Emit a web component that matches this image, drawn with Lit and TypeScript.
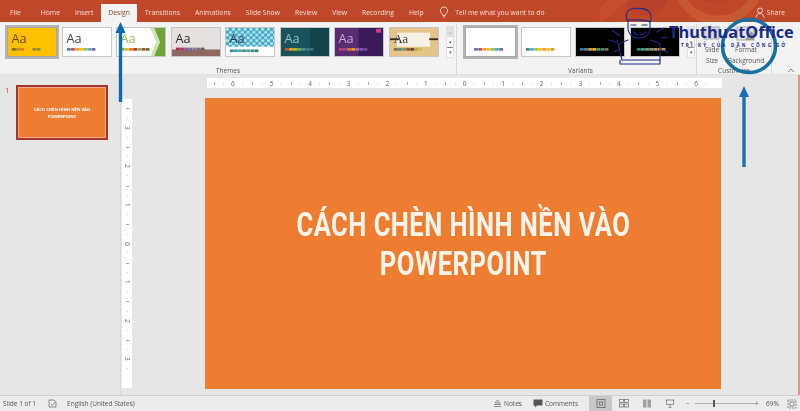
import { LitElement, html, css, svg } from "lit";
import { customElement } from "lit/decorators.js";

const RULER_H = [6, 5, 4, 3, 2, 1, 0, 1, 2, 3, 4, 5, 6];
const RULER_V = [3, 2, 1, 0, 1, 2, 3];
const TABS = ["File", "Home", "Insert", "Design", "Transitions", "Animations", "Slide Show", "Review", "View", "Recording", "Help"];
const PALETTE = ["#4f81bd", "#c0504d", "#f79646", "#ffc000", "#9bbb59", "#4bacc6", "#8064a2"];

type Theme = { bg: string; aa: string; extra?: unknown; serif?: boolean; swY?: number; swX?: number; sw?: string[]; sel?: boolean };

const dots = svg`<defs><pattern id="dots" width="6" height="6" patternUnits="userSpaceOnUse"><rect width="6" height="6" fill="#3fa9c9"/><circle cx="1.5" cy="1.5" r="1.6" fill="#bfe3ee"/><circle cx="4.5" cy="4.5" r="1.6" fill="#bfe3ee"/></pattern></defs>`;

const THEMES: Theme[] = [
  { bg: "#ffc000", aa: "#6b4a10", sw: ["#7b6a2e", "#c08a20", "#e8741c", "#ffc000", "#ffc000", "#8c8c3c", "#8c8c3c"], sel: true },
  { bg: "#ffffff", aa: "#404040" },
  { bg: "#ffffff", aa: "#8fc04c", extra: svg`<path d="M37 0H49V30H37L43 15Z" fill="#6ea53a"/><path d="M34 0H38L44 15L38 30H34L40 15Z" fill="#cfe3b2"/>`, sw: ["#7ab648", "#e8b820", "#e87c1c", "#b83020", "#7ab648", "#c04030", "#4a7a28"] },
  { bg: "#e6e0de", aa: "#2b2b2b", extra: svg`<rect x="0" y="23" width="49" height="7" fill="#8c6a60"/>`, swY: 21, sw: ["#b02a4c", "#a83a6c", "#8c5a90", "#7a6aa8", "#8a7aa0", "#7a7080", "#6a5a60"] },
  { bg: "url(#dots)", aa: "#1f3f55", extra: svg`<rect x="0" y="20" width="49" height="10" fill="#ffffff"/>`, swY: 23, sw: ["#2f8aa8", "#3f9ab0", "#4fa0a8", "#3f9078", "#4f9a88", "#3f8a88", "#2f7a80"] },
  { bg: "#17484f", aa: "#8cc8c8", extra: svg`<rect width="49" height="30" fill="#0d3a44" opacity=".4"/><rect x="0" y="0" width="30" height="30" fill="#1f6468" opacity=".5"/>`, sw: ["#d0532a", "#e6a820", "#c8b830", "#7ab648", "#4f9a88", "#3f7a90", "#4f6a90"] },
  { bg: "#3a1a58", aa: "#c8a8d8", extra: svg`<rect x="0" y="0" width="24" height="30" fill="#6a3a80" opacity=".6"/><rect x="42" y="1" width="5" height="4" fill="#d0408c"/>`, sw: ["#c84080", "#a04890", "#e07030", "#e6a820", "#a868c0", "#8858b0", "#7048a0"] },
  { bg: "#e4c48a", aa: "#3a3a3a", serif: true, extra: svg`<rect x="7" y="5" width="34" height="15" fill="#f8f2e6"/><rect x="0" y="11" width="9" height="2" fill="#3a3020"/><rect x="40" y="11" width="9" height="2" fill="#3a3020"/>`, sw: ["#8a6a30", "#4f8a90", "#7a9a50", "#a04a30", "#5a4a30", "#c8a040", "#d8b850"] },
];

const VARIANTS: Theme[] = [
  { bg: "#ffffff", aa: "", sel: true, swX: 8, sw: ["#4f81bd", "#c0504d", "#f79646", "#ffc000", "#9bbb59", "#4bacc6", "#8064a2"] },
  { bg: "#ffffff", aa: "", swX: 4, sw: ["#3f8a78", "#4bacc6", "#9bbb59", "#ffc000", "#f79646", "#ffc000", "#c8a040"] },
  { bg: "#000000", aa: "", swX: 4, sw: ["#4f7a9d", "#4f8a90", "#d8a040", "#e6c040", "#6a9a60", "#3f8a88", "#7a7a50"] },
  { bg: "#000000", aa: "", swX: 6, sw: ["#3f8a78", "#4f9a88", "#7a9a80", "#8a9a70", "#b0a060", "#a89a60", "#c8a040"] },
];

function thumb(t: Theme) {
  const x0 = t.swX ?? 4;
  const y = t.swY ?? 21.5;
  const isDots = t.bg === "url(#dots)";
  return html`<div class="thumb ${t.sel ? "sel" : ""}">
    <svg viewBox="0 0 49 30" width="100%" height="100%" preserveAspectRatio="none">
      <rect width="49" height="30" fill="${isDots ? "#3fa9c9" : t.bg}"></rect>
      ${isDots ? dots : ""}
      ${isDots ? svg`<rect width="49" height="30" fill="url(#dots)"></rect>` : ""}
      ${t.extra ?? ""}
      ${t.aa ? svg`<text x="3.500" y="16" font-size="13" fill="${t.aa}" font-family="${t.serif ? "Liberation Serif" : "Open Sans"}">Aa</text>` : ""}
      ${(t.sw ?? PALETTE).map((c, i) => svg`<rect x="${x0 + i * 4.2}" y="${y}" width="3.9" height="2.8" fill="${c}"></rect>`)}
    </svg>
  </div>`;
}

const scroller = html`<div class="scroller">
  <span class="dim">▴</span><span>▾</span><span class="more">▾</span>
</div>`;

@customElement("app-root")
export class AppRoot extends LitElement {
  static styles = css`
    :host { display: block; width: 800px; height: 411px; position: relative; overflow: hidden; font-family: "Open Sans", "Liberation Sans", sans-serif; }
    .app { display: flex; flex-direction: column; height: 411px; background: #e6e6e6; filter: blur(0.35px); }

    .titlebar { height: 22px; background: #c0482a; display: flex; align-items: flex-end; position: relative; padding-left: 2.5px; flex: none; color: #f6ddd4; font-size: 6.8px; overflow: hidden; }
    .art { position: absolute; left: 600px; top: 0; width: 200px; height: 22px; }
    .tab { height: 18px; padding: 0 7.5px; display: flex; align-items: center; position: relative; white-space: nowrap; padding-bottom: 2px; box-sizing: border-box; }
    .tab:first-of-type { margin-right: 5px; }
    .tab.active { background: #f3f3f3; color: #8a4a38; }
    .tell { display: flex; align-items: center; gap: 6px; margin-left: 8px; height: 18px; padding-bottom: 2px; box-sizing: border-box; position: relative; white-space: nowrap; }
    .share { margin-left: auto; margin-right: 15px; display: flex; align-items: center; gap: 1px; height: 18px; padding-bottom: 2px; box-sizing: border-box; position: relative; }

    .ribbon { height: 53px; flex: none; background: #f3f3f3; display: flex; border-bottom: 1px solid #e0e0e0; box-sizing: border-box; color: #555; font-size: 6.5px; }
    .group { display: flex; flex-direction: column; border-right: 1px solid #d8d8d8; box-sizing: border-box; height: 51px; margin-top: 2px; }
    .g-themes { width: 457px; padding-left: 7px; }
    .g-variants { width: 240px; padding-left: 8px; }
    .g-custom { width: 75px; }
    .row { display: flex; gap: 4.5px; height: 34px; margin-top: 1px; align-items: center; }
    .label { text-align: center; margin-top: auto; line-height: 9px; }
    .g-themes .label { padding-right: 7px; }
    .thumb { width: 50px; height: 30px; flex: none; border: 1px solid #c6c6c6; box-sizing: border-box; background: #fff; }
    .thumb.sel { outline: 2px solid #b4b4b4; border-color: #a8a8a8; }
    .thumb svg { display: block; }
    .scroller { width: 8px; height: 32px; margin-left: 3px; display: flex; flex-direction: column; flex: none; background: #fafafa; border: 1px solid #e0e0e0; box-sizing: border-box; font-size: 5px; line-height: 10px; text-align: center; color: #666; }
    .scroller .dim { background: #e0e0e0; color: #bbb; }
    .scroller .more { border-top: 1px solid #888; line-height: 9px; }
    .g-variants .thumb.sel { width: 51px; }
    .custom-row { display: flex; line-height: 11px; text-align: center; }
    .cmd { display: flex; flex-direction: column; align-items: center; padding-top: 1px; width: 30px; flex: none; }
    .cmd.wide { width: 40px; margin-left: -1px; white-space: nowrap; }
    .cmd svg { margin-bottom: 2px; display: block; }
    .g-custom .stack { display: flex; flex-direction: column; height: 100%; }
    .collapse { width: 28px; display: flex; justify-content: center; align-items: flex-end; padding: 0 0 1px 10px; box-sizing: border-box; }

    .work { flex: 1; display: flex; min-height: 0; position: relative; }
    .pane { width: 121px; flex: none; display: flex; gap: 4px; padding: 10px 0 0 5px; box-sizing: border-box; border-right: 1px solid #dadada; }
    .num { color: #c0583a; font-size: 8px; line-height: 10px; width: 6px; }
    .mini { width: 92px; height: 55px; box-sizing: border-box; border: 2px solid #a5342b; background: #ed7d31; box-shadow: inset 0 0 0 1px #f0a98a; display: flex; align-items: center; justify-content: center; text-align: center; color: #fff; font-weight: 700; font-size: 4.2px; line-height: 7px; margin-left: 1px; }
    .stage { flex: 1; display: grid; grid-template-columns: 10px 1fr; grid-template-rows: 10px 1fr; padding: 3px 10px 7px 1px; }
    .hr-wrap { grid-column: 2; grid-row: 1; padding-left: 75px; }
    .hr { width: 515px; height: 10px; background: #fff; display: flex; justify-content: center; }
    .rcell { flex: none; display: flex; align-items: center; justify-content: center; color: #666; font-size: 6.5px;
      background:
        linear-gradient(#aaa, #aaa) 0 50% / 1px 3px no-repeat,
        linear-gradient(#ccc, #ccc) 25% 50% / 1px 1px no-repeat,
        linear-gradient(#ccc, #ccc) 75% 50% / 1px 1px no-repeat; }
    .hr .rcell { width: 38.6px; height: 10px; }
    .vr { grid-column: 1; grid-row: 2; width: 10px; margin-top: 11px; height: 289px; background: #fff; display: flex; flex-direction: column; justify-content: center; }
    .vr .rcell { height: 38.6px; width: 10px; writing-mode: vertical-lr;
      background:
        linear-gradient(#aaa, #aaa) 50% 0 / 3px 1px no-repeat,
        linear-gradient(#ccc, #ccc) 50% 25% / 1px 1px no-repeat,
        linear-gradient(#ccc, #ccc) 50% 75% / 1px 1px no-repeat; }
    .canvas { grid-column: 2; grid-row: 2; padding: 10px 0 0 73px; }
    .slide { width: 516px; height: 291px; background: #ed7d31; color: #fdf4ec; display: flex; align-items: center; justify-content: center; text-align: center; }
    .slide-title { font-family: Roboto, "Liberation Sans", sans-serif; font-weight: 700; font-size: 33px; line-height: 39px; white-space: nowrap; transform: scaleX(0.775); letter-spacing: 0.6px; padding-top: 1px; }
    .edge { width: 2px; flex: none; background: #dc9a78; }

    .status { height: 15px; flex: none; background: #ececec; border-top: 1px solid #d0d0d0; display: flex; align-items: center; font-size: 6.5px; color: #555; padding-left: 3px; position: relative; white-space: nowrap; }
    .status .lang { margin-left: 10px; }
    .st-right { margin-left: auto; display: flex; align-items: center; height: 100%; }
    .sico { display: flex; align-items: center; gap: 2px; }
    .sico.gap { margin-left: 11px; }
    .view { width: 23px; height: 100%; display: flex; align-items: center; justify-content: center; }
    .view.on { background: #c8c8c8; margin-left: 11px; }
    .minus { margin-left: 5px; width: 4px; }
    .slider { width: 60px; height: 1px; background: #b0b0b0; position: relative; margin-left: 5px; }
    .plus { width: 4px; }
    .knob { position: absolute; left: 18px; top: -3px; width: 2px; height: 7px; background: #555; }
    .zoom { margin-left: 7px; width: 14px; }
    .fit { margin: 0 3px 0 7px; }
    .flag { margin-left: 12px; }

    .overlay { position: absolute; inset: 0; pointer-events: none; }
    .overlay svg { position: absolute; left: 0; top: 0; }
    .logo { position: absolute; left: 669px; top: 21px; font-family: "Open Sans", sans-serif; font-weight: 700; font-size: 16.3px; line-height: 22px; color: #1a2a8c; white-space: nowrap; }
    .tag { position: absolute; left: 681px; top: 42px; font-family: "Open Sans", sans-serif; font-weight: 700; font-size: 4.5px; line-height: 7px; letter-spacing: 2.2px; color: #1a2a8c; white-space: nowrap; }
  `;

  render() {
    return html`<div class="app">
      <div class="titlebar">
        <svg class="art" viewBox="0 0 200 22">
          <circle cx="45" cy="-8" r="24" fill="#b8432a"></circle>
          <circle cx="118" cy="-22" r="42" fill="none" stroke="#c8582f" stroke-width="9"></circle>
          <circle cx="118" cy="-22" r="26" fill="#b8432a"></circle>
          <path d="M0 22 L30 0 H8 L-15 22Z" fill="#c6502d"></path>
        </svg>
        ${TABS.map((t) => html`<div class="tab ${t === "Design" ? "active" : ""}">${t}</div>`)}
        <div class="tell">
          <svg width="10" height="12" viewBox="0 0 10 12" fill="none" stroke="#f6ddd4" stroke-width="0.9"><path d="M5 1a3.6 3.6 0 0 0-2 6.6L3.8 9.5h2.4L7 7.6A3.6 3.6 0 0 0 5 1ZM4 11h2"></path></svg>
          <span>Tell me what you want to do</span>
        </div>
        <div class="share">
          <svg width="11" height="11" viewBox="0 0 11 11" fill="none" stroke="#f6ddd4" stroke-width="0.9"><circle cx="5" cy="3.5" r="2.5"></circle><path d="M1 10.5c.3-2.6 2-4 4-4s3.7 1.4 4 4"></path></svg>
          <span>Share</span>
        </div>
      </div>

      <div class="ribbon">
        <div class="group g-themes">
          <div class="row">${THEMES.map(thumb)}${scroller}</div>
          <div class="label">Themes</div>
        </div>
        <div class="group g-variants">
          <div class="row">${VARIANTS.map(thumb)}${scroller}</div>
          <div class="label">Variants</div>
        </div>
        <div class="group g-custom">
          <div class="stack">
            <div class="custom-row">
              <div class="cmd">
                <svg width="18" height="17" viewBox="0 0 18 17"><rect x="1" y="2" width="15" height="12" fill="#d8d8d8" stroke="#aaa"></rect></svg>
                <span>Slide<br />Size</span>
              </div>
              <div class="cmd wide">
                <svg width="20" height="17" viewBox="0 0 20 17"><rect x="1" y="2" width="17" height="13" fill="#e4e4e4" stroke="#aaa"></rect><path d="M9 15L15 6L18 9V15Z" fill="#9a9a9a"></path></svg>
                <span>Format<br />Background</span>
              </div>
            </div>
            <div class="label">Customize</div>
          </div>
        </div>
        <div class="collapse">
          <svg width="8" height="6" viewBox="0 0 8 6" fill="none" stroke="#777"><path d="M1 5L4 2L7 5"></path></svg>
        </div>
      </div>

      <div class="work">
        <div class="pane">
          <div class="num">1</div>
          <div class="mini"><div>CÁCH CHÈN HÌNH NỀN VÀO<br />POWERPOINT</div></div>
        </div>
        <div class="stage">
          <div class="hr-wrap"><div class="hr">${RULER_H.map((n) => html`<div class="rcell">${n}</div>`)}</div></div>
          <div class="vr">${RULER_V.map((n) => html`<div class="rcell">${n}</div>`)}</div>
          <div class="canvas">
            <div class="slide"><div class="slide-title">CÁCH CHÈN HÌNH NỀN VÀO<br />POWERPOINT</div></div>
          </div>
        </div>
        <div class="edge"></div>
      </div>

      <div class="status">
        <span>Slide 1 of 1</span>
        <svg class="flag" width="9" height="9" viewBox="0 0 9 9" fill="none" stroke="#777" stroke-width="0.8"><path d="M1 1H6L8 3V8H1Z"></path><path d="M3 5L4.5 6.5L7 3"></path></svg>
        <span class="lang">English (United States)</span>
        <div class="st-right">
          <div class="sico">
            <svg width="9" height="9" viewBox="0 0 9 9" fill="none" stroke="#777" stroke-width="0.8"><path d="M4.5 1L2 4H7ZM1 5.5H8M1 7.5H8"></path></svg>
            <span>Notes</span>
          </div>
          <div class="sico gap">
            <svg width="10" height="9" viewBox="0 0 10 9"><path d="M0.5 0.5H9.5V6.5H4L2 8.5V6.5H0.5Z" fill="#555"></path></svg>
            <span>Comments</span>
          </div>
          <div class="view on">
            <svg width="10" height="9" viewBox="0 0 10 9" fill="none" stroke="#777"><rect x="1" y="0.5" width="8" height="8"></rect><rect x="3.5" y="3" width="3" height="3"></rect></svg>
          </div>
          <div class="view">
            <svg width="10" height="9" viewBox="0 0 10 9" fill="none" stroke="#777" stroke-width="0.8"><rect x="0.5" y="0.5" width="4" height="3"></rect><rect x="5.5" y="0.5" width="4" height="3"></rect><rect x="0.5" y="5" width="4" height="3"></rect><rect x="5.5" y="5" width="4" height="3"></rect></svg>
          </div>
          <div class="view">
            <svg width="10" height="9" viewBox="0 0 10 9"><rect x="1" y="0.5" width="8" height="8" fill="#a0a0a0"></rect><path d="M5 0.5V8.5" stroke="#eee"></path></svg>
          </div>
          <div class="view">
            <svg width="10" height="9" viewBox="0 0 10 9" fill="none" stroke="#777" stroke-width="0.8"><path d="M0.5 1H9.5M1.5 1V5.5H8.5V1M5 5.5V8M3.5 8.5H6.5"></path></svg>
          </div>
          <span class="minus">−</span>
          <div class="slider"><div class="knob"></div></div>
          <span class="plus">+</span>
          <span class="zoom">69%</span>
          <svg class="fit" width="10" height="10" viewBox="0 0 10 10" fill="none" stroke="#777" stroke-width="0.8"><rect x="1" y="1" width="8" height="8" stroke-dasharray="2 1"></rect><rect x="3" y="3" width="4" height="4"></rect></svg>
        </div>
      </div>
    </div>

    <div class="overlay">
      <svg width="800" height="411" viewBox="0 0 800 411" fill="none">
        <path d="M120.5 102V30" stroke="#0a6ab0" stroke-width="3.4"></path>
        <path d="M115.5 33L120.5 22L125.5 33Z" fill="#0a6ab0"></path>
        <path d="M744 167V96" stroke="#1a6fb4" stroke-width="3.4"></path>
        <path d="M739 97L744 86L749 97Z" fill="#1a6fb4"></path>
        <circle cx="749" cy="46" r="26.5" stroke="#15709f" stroke-width="3.6"></circle>
        <g stroke="#1c2a86" stroke-width="1.1" stroke-linejoin="round" stroke-linecap="round">
          <path d="M627 20C625 14 627 9 634 8.5C640 7.5 648 9 650 13C651.500 16 651 20 650 22C646 19 634 20 627 20Z"></path>
          <path d="M628 20V28C628 34 633 38 639 38C645 38 650 34 650 28V21"></path>
          <path d="M631 25H636M642 25H647M633 32C637 36 642 36 646 32"></path>
          <path d="M628 40C624 41 621 43 619 45M650 40C654 41 657 42 660 44"></path>
          <path d="M617 40L622 60H660L660 43"></path>
          <path d="M620 60V64H660V60"></path>
          <path d="M612 30L620 36M609 40L616 42M614 52L620 49M657 32L664 28M661 38L668 37M661 50L668 52"></path>
        </g>
      </svg>
      <div class="logo">ThuthuatOffice</div>
      <div class="tag">TRI KỶ CỦA DÂN CÔNG SỞ</div>
    </div>`;
  }
}
